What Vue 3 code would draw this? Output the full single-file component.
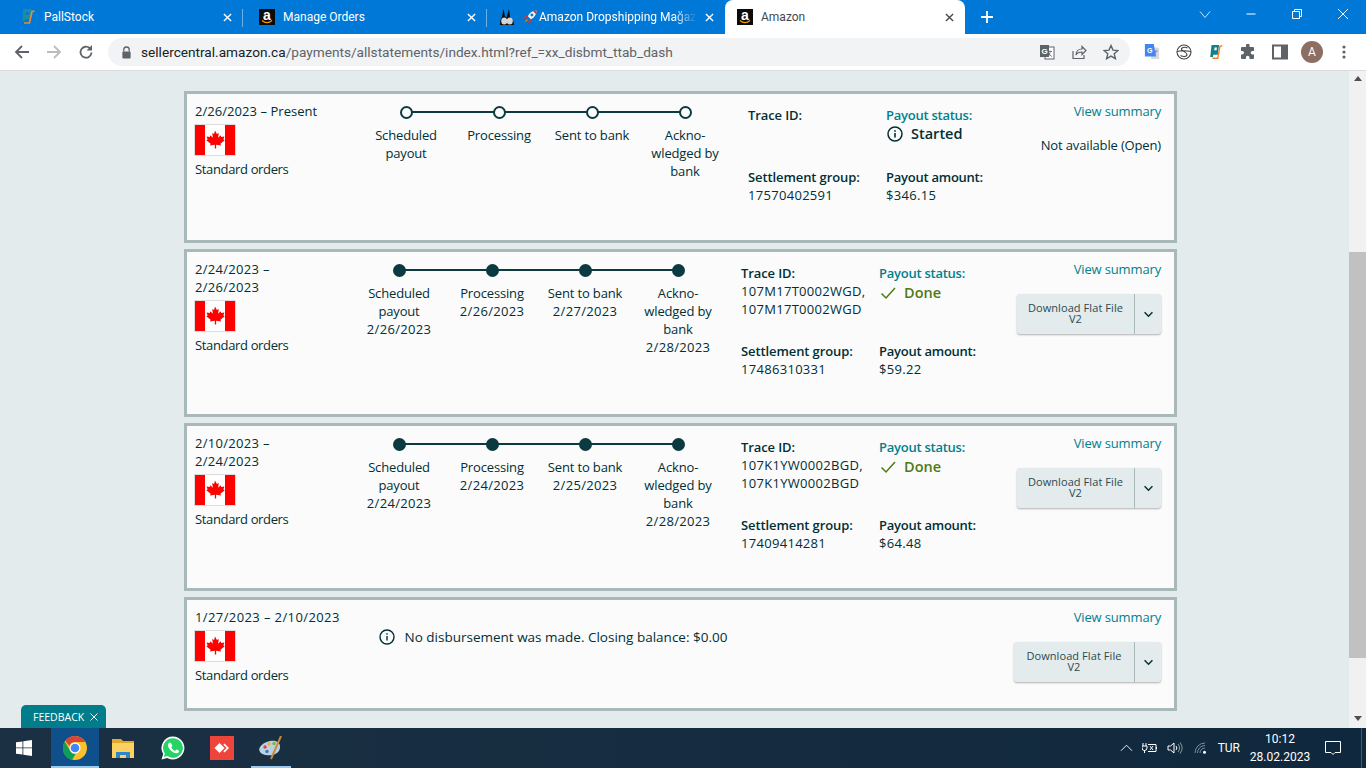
<template>
  <div class="screen">
    <!-- tab strip -->
    <div class="tabstrip">
      <div v-for="tab in tabs" :key="tab.title" class="tab" :class="[tab.cls, { active: tab.active, sep: tab.sep }]" :style="{ width: tab.width + 'px' }">
        <svg v-if="tab.icon === 'pall'" class="fav" viewBox="0 0 16 16">
          <path d="M3 0h8.500L10 10H5L4.500 12H2.500z" fill="#1b8f9c" />
          <path d="M6 3h3l-.5 3H5.500z" fill="#0078d7" />
          <path d="M14.500 2 12 2.500 9.500 14H4" fill="none" stroke="#e58a3a" stroke-width="1.700" />
        </svg>
        <span v-else-if="tab.icon === 'amazon'" class="fav amz">a<svg class="smile" viewBox="0 0 16 4"><path d="M3 .5c3 2.500 7 2.500 10 0" fill="none" stroke="#f90" stroke-width="1.300" /></svg></span>
        <template v-else>
          <svg class="fav" viewBox="0 0 16 16">
            <path d="M1 16c0-4 .5-6 2-8L4.500 0 6 7.500l1.500 1L10 0l1 8c2 1.500 4 4 4 8z" fill="#0c0c0c" />
            <ellipse cx="5.200" cy="12" rx="3" ry="3.500" fill="#d5d5d5" />
            <ellipse cx="10.800" cy="12" rx="3" ry="3.500" fill="#d5d5d5" />
          </svg>
          <svg class="rocket" viewBox="0 0 16 16">
            <path d="M15.500.500c-4.500 0-8 2.500-10 6.500l3.500 3.500c4-2 6.500-5.500 6.500-10z" fill="#f2f5f8" />
            <path d="M15.500.500c-1.500 0-3 .3-4 .8l3.200 3.200c.5-1 .8-2.500.8-4z" fill="#d9342b" />
            <circle cx="10.200" cy="5.800" r="1.700" fill="#2a6fb8" />
            <path d="M5.500 6.500 2 7 .5 10l3.500-.5zM9.500 10.500 9 14l-3 1.500.5-3.500z" fill="#d9342b" />
            <path d="M4.500 10.500 1.500 14.500l4-3z" fill="#f6a01a" />
          </svg>
        </template>
        <span class="tab-title" :class="{ fade: tab.fade }">{{ tab.title }}</span>
        <svg class="tab-x" viewBox="0 0 10 10"><path d="M1 1l8 8M9 1l-8 8" fill="none" stroke="currentColor" stroke-width="1.500" /></svg>
      </div>
      <svg class="newtab" viewBox="0 0 12 12"><path d="M6 0v12M0 6h12" fill="none" stroke="#fff" stroke-width="1.800" /></svg>
      <div class="winctl">
        <span><svg viewBox="0 0 12 12" width="12" height="12"><path d="M1 3.500l5 6 5-6" fill="none" stroke="#cfe4f7" /></svg></span>
        <span><svg viewBox="0 0 12 12" width="12" height="12"><path d="M1.500 6h9" stroke="#fff" /></svg></span>
        <span><svg viewBox="0 0 12 12" width="12" height="12"><path d="M1.500 3.500h7v7h-7zM3.500 3.500v-2h7v7h-2" fill="none" stroke="#fff" /></svg></span>
        <span><svg viewBox="0 0 12 12" width="12" height="12"><path d="M1 1l10 10M11 1 1 11" fill="none" stroke="#fff" /></svg></span>
      </div>
    </div>

    <!-- toolbar -->
    <div class="toolbar">
      <svg class="tool back" viewBox="0 0 16 16"><path d="M15 8H2M8 2 2 8l6 6" fill="none" stroke="#5f6368" stroke-width="1.800" /></svg>
      <svg class="tool forward" viewBox="0 0 16 16"><path d="M1 8h13M8 2l6 6-6 6" fill="none" stroke="#babcbe" stroke-width="1.800" /></svg>
      <svg class="tool reload" viewBox="0 0 16 16"><path d="M13.500 8.500A5.500 5.500 0 1 1 11.800 4.200" fill="none" stroke="#5f6368" stroke-width="1.800" /><path d="M14 1v5.500H8.500z" fill="#5f6368" /></svg>
      <div class="omnibox">
        <svg class="lock" viewBox="0 0 12 14"><path d="M3 6V4a3 3 0 0 1 6 0v2" fill="none" stroke="#5f6368" stroke-width="1.400" /><rect x="1.500" y="6" width="9" height="7.500" rx="1" fill="#5f6368" /></svg>
        <span class="url"><b>sellercentral.amazon.ca</b>/payments/allstatements/index.html?ref_=xx_disbmt_ttab_dash</span>
        <svg class="omni-ico" viewBox="0 0 16 16"><rect x="6" y="3" width="9" height="12" fill="#fff" stroke="#5f6368" /><path d="M9.500 7.500h3.500M11.200 6.500c0 3-1 5-2 6M10 9c.5 1.500 1.500 3 3 3.500" fill="none" stroke="#5f6368" stroke-width=".8" /><rect x="1" y="1" width="9" height="12" fill="#5f6368" /><text x="5.500" y="10" font-size="8" font-weight="700" text-anchor="middle" fill="#fff" font-family="Liberation Sans">G</text></svg>
        <svg class="omni-ico" viewBox="0 0 16 16"><path d="M2 7v7.500h11V11" fill="none" stroke="#5f6368" stroke-width="1.200" /><path d="M5 11c0-4 3-6 6-6V2.500l4 4-4 4V8c-3 0-5 1-6 3z" fill="none" stroke="#5f6368" stroke-width="1.200" /></svg>
        <svg class="omni-ico" viewBox="0 0 16 16"><path d="m8 1.500 2 4.600 5 .4-3.800 3.300 1.200 4.900L8 12.100l-4.400 2.600 1.200-4.900L1 6.500l5-.4z" fill="none" stroke="#5f6368" stroke-width="1.400" /></svg>
      </div>
      <div class="extensions">
        <svg class="ext" viewBox="0 0 16 18"><rect x="7" y="4" width="9" height="13" fill="#d7d9dc" /><path d="M10.500 8h4M12.500 7c0 3-1 5-2 6" fill="none" stroke="#777" stroke-width=".8" /><path d="M0 0h10l2.500 14H0z" fill="#4285f4" /><text x="5.500" y="10" font-size="8" font-weight="700" text-anchor="middle" fill="#fff" font-family="Liberation Sans">G</text></svg>
        <svg class="ext" viewBox="0 0 16 16"><circle cx="8" cy="8" r="7" fill="none" stroke="#444" stroke-width="1.100" /><path d="M1 7.500c3-1 10-1 14 0M11.500 4C9 2.500 5 3.500 5.500 5.500S11 8 11 10.500s-4 2.500-6.500 1" fill="none" stroke="#444" stroke-width="1.100" /></svg>
        <svg class="ext" viewBox="0 0 16 18"><path d="M3 1h8.500L10 12H5l-.5 2.500H1.500z" fill="#14808c" /><path d="M6.500 4h2.500l-.4 3H6z" fill="#fff" /><path d="M15 2l-2.500.5-2.500 13.500H4" fill="none" stroke="#ef7f2a" stroke-width="1.500" /></svg>
        <svg class="ext" viewBox="0 0 16 16"><path d="M6 1.500a1.800 1.800 0 0 1 3.600 0V3H13a1 1 0 0 1 1 1v3h-1.500a1.800 1.800 0 0 0 0 3.600H14V14a1 1 0 0 1-1 1H9.500v-1.500a1.800 1.800 0 0 0-3.600 0V15H2a1 1 0 0 1-1-1v-3.500h1.200a1.800 1.800 0 0 0 0-3.600H1V4a1 1 0 0 1 1-1h4z" fill="#5f6368" /></svg>
        <svg class="ext" viewBox="0 0 16 16"><rect x="1" y="1.500" width="14" height="13" fill="none" stroke="#5f6368" stroke-width="2" /><rect x="9" y="1.500" width="6" height="13" fill="#5f6368" /></svg>
        <span class="avatar">A</span>
        <svg class="ext" viewBox="0 0 16 16"><circle cx="8" cy="3" r="1.600" fill="#5f6368" /><circle cx="8" cy="8" r="1.600" fill="#5f6368" /><circle cx="8" cy="13" r="1.600" fill="#5f6368" /></svg>
      </div>
    </div>

    <!-- page -->
    <div class="viewport">
      <div class="page">
        <section v-for="row in statements" :key="row.date" class="card" :class="row.kind">
          <div class="col-left">
            <div class="date num">{{ row.date }}</div>
            <svg class="flag" viewBox="0 0 42 32">
              <rect x=".5" y=".5" width="41" height="31" fill="#fff" stroke="#dcdcdc" />
              <rect x="1" y="1" width="10" height="30" fill="#f00" />
              <rect x="31" y="1" width="10" height="30" fill="#f00" />
              <path d="M21 6.500l1.900 3.500 1.900-1-.7 4.800 2.500-2.500.6 1.600 3.200-.5-1 3.200 1.400.7-4.400 3.500.6 1.700-4.900-.7.100 3.700h-1.400l.1-3.700-4.900.7.600-1.700-4.400-3.500 1.400-.7-1-3.200 3.200.5.600-1.600 2.500 2.500-.7-4.800 1.900 1z" fill="#f00" />
            </svg>
            <div class="orders">Standard orders</div>
          </div>

          <template v-if="row.steps">
            <div class="timeline">
              <div v-for="(step, i) in row.steps" :key="step.label" class="step" :class="{ filled: row.filled, last: i === row.steps.length - 1 }">
                <span class="dot"></span>
                <span class="step-label">{{ step.label }}</span>
                <span v-if="step.date" class="step-date num">{{ step.date }}</span>
              </div>
            </div>
            <div class="info">
              <div class="cell">
                <div class="key">Trace ID:</div>
                <div v-for="t in row.trace" :key="t + row.date" class="val num">{{ t }}</div>
              </div>
              <div class="cell">
                <div class="key status-key">Payout status:</div>
                <div class="status" :class="row.filled ? 'done' : 'started'">
                  <svg v-if="row.filled" class="status-ico" viewBox="0 0 16 16"><path d="M1.500 8.500 6 13l9-10" fill="none" stroke="#4f7a12" stroke-width="1.500" /></svg>
                  <svg v-else class="status-ico" viewBox="0 0 16 16"><circle cx="8" cy="8" r="7" fill="none" stroke="#002f36" stroke-width="1.500" /><rect x="7.200" y="7" width="1.600" height="4.500" fill="#002f36" /><rect x="7.200" y="4.200" width="1.600" height="1.600" fill="#002f36" /></svg>
                  {{ row.filled ? 'Done' : 'Started' }}
                </div>
              </div>
              <div class="cell">
                <div class="key">Settlement group:</div>
                <div class="val num">{{ row.group }}</div>
              </div>
              <div class="cell">
                <div class="key">Payout amount:</div>
                <div class="val num">{{ row.amount }}</div>
              </div>
            </div>
          </template>

          <div v-else class="notice">
            <svg class="notice-ico" viewBox="0 0 16 16"><circle cx="8" cy="8" r="7" fill="none" stroke="#002f36" stroke-width="1.400" /><rect x="7.300" y="7" width="1.400" height="4.500" fill="#002f36" /><rect x="7.300" y="4.200" width="1.400" height="1.500" fill="#002f36" /></svg>
            No disbursement was made. Closing balance: $0.00
          </div>

          <div class="col-right">
            <a class="summary">View summary</a>
            <div v-if="row.kind === 'open'" class="na">Not available (Open)</div>
            <div v-else class="download">
              <span class="dl-main">Download Flat File<br />V2</span>
              <span class="dl-arrow"><svg viewBox="0 0 12 8" width="11" height="7"><path d="M1.500 1.500 6 6l4.500-4.500" fill="none" stroke="#002f36" stroke-width="1.600" /></svg></span>
            </div>
          </div>
        </section>
      </div>
      <div class="scrollbar">
        <span class="arrow up"></span>
        <span class="thumb"></span>
        <span class="arrow down"></span>
      </div>
      <div class="feedback">FEEDBACK <svg viewBox="0 0 8 8" width="8" height="8"><path d="M.5.500l7 7M7.500.500l-7 7" fill="none" stroke="#fff" stroke-width="1" /></svg></div>
    </div>

    <!-- taskbar -->
    <div class="taskbar">
      <svg class="start" viewBox="0 0 16 16"><path d="M0 2.300 6.500 1.400v6.100H0zM7.300 1.300 16 0v7.500H7.300zM0 8.300h6.500v6.200L0 13.700zM7.300 8.300H16V16l-8.700-1.300z" fill="#fff" /></svg>
      <div class="task chrome">
        <svg viewBox="0 0 24 24" width="24" height="24">
          <circle cx="12" cy="12" r="12" fill="#fbc02d" />
          <path d="M12 0a12 12 0 0 1 10.400 6H12a6 6 0 0 0-5.700 4L2.300 4.800A12 12 0 0 1 12 0z" fill="#db4437" />
          <path d="M1.800 5.600 7 14.500a6 6 0 0 0 5.500 3.500L9 24A12 12 0 0 1 1.800 5.600z" fill="#0f9d58" />
          <circle cx="12" cy="12" r="5.500" fill="#fff" /><circle cx="12" cy="12" r="4.300" fill="#4285f4" />
        </svg>
      </div>
      <div class="task folder">
        <svg viewBox="0 0 24 24" width="24" height="24"><path d="M1 3h9l2 2h11v17H1z" fill="#e0a92e" /><rect x="1" y="7" width="22" height="15" fill="#fbd25f" /><path d="M5 22v-6h14v6h-4v-3H9v3z" fill="#2f86c9" /></svg>
      </div>
      <div class="task whatsapp">
        <svg viewBox="0 0 24 24" width="24" height="24"><path d="M12 .5A11.500 11.500 0 0 0 2.200 18L.5 23.500 6.200 22A11.500 11.500 0 1 0 12 .5z" fill="#fff" /><path d="M12 2.200A9.800 9.800 0 0 0 3.800 17.500l-1 3.500 3.600-1A9.800 9.800 0 1 0 12 2.200z" fill="#25d366" /><path d="M8.800 6.500c-.6 0-1.800 1-1.800 2.800 0 3 4.500 8 8.500 8 1.800 0 2.700-1.400 2.700-2.200 0-.4-2.300-1.700-2.700-1.600-.4.100-.9 1.300-1.300 1.300-1 0-3.900-2.500-3.900-3.600 0-.4 1-1 1-1.500 0-.4-1-3.200-2.500-3.200z" fill="#fff" /></svg>
      </div>
      <div class="task anydesk">
        <svg viewBox="0 0 24 24" width="24" height="24"><rect width="24" height="24" fill="#ef443b" /><path d="M9.500 7l5 5-5 5-5-5z" fill="#fff" /><path d="M14.500 7.500l4.500 4.500-4.500 4.500-1.200-1.200 3.300-3.300-3.300-3.300z" fill="#fff" /></svg>
      </div>
      <div class="task paint">
        <svg viewBox="0 0 24 24" width="24" height="24"><path d="M11 5c6-1 10 1 10 6 0 7-8 9-14 8-6-1-8-5-6-8s5-5 10-6z" fill="#b9d3e4" /><circle cx="6" cy="11" r="1.700" fill="#d9453a" /><circle cx="10" cy="8" r="1.700" fill="#ecb22e" /><circle cx="15" cy="7.500" r="1.700" fill="#7cb342" /><circle cx="8" cy="15.500" r="1.700" fill="#3b78c3" /><path d="M22 0 12 23" stroke="#c98a3c" stroke-width="2" /></svg>
      </div>
      <div class="tray">
        <svg class="tray-ico chev" viewBox="0 0 14 8"><path d="M1 7l6-6 6 6" fill="none" stroke="#fff" /></svg>
        <svg class="tray-ico" viewBox="0 0 16 12" width="16" height="12"><path d="M1 1v3M4 1v3M0 4h5v2a2 2 0 0 1-5 0zM2.500 8v3" fill="none" stroke="#fff" /><path d="M6 2.500h8v7H6M14.500 5v2" fill="none" stroke="#fff" /><path d="M8 4l3 4M11 4 8 8" stroke="#fff" /></svg>
        <svg class="tray-ico spk" viewBox="0 0 16 12" width="16" height="12"><path d="M1 4h2.500L7 1v10L3.500 8H1z" fill="none" stroke="#fff" /><path d="M9 4a3 3 0 0 1 0 4" fill="none" stroke="#fff" /><path d="M11 2a6 6 0 0 1 0 8M13 .5a9 9 0 0 1 0 11" fill="none" stroke="#8b99a3" /></svg>
        <svg class="tray-ico wifi" viewBox="0 0 14 12" width="14" height="12"><path d="M1 11a10 10 0 0 1 10-10M3.500 11A7.500 7.500 0 0 1 11 3.500M6 11a5 5 0 0 1 5-5" fill="none" stroke="#7d8c98" /><circle cx="10.500" cy="10.200" r="1.500" fill="#fff" /></svg>
        <span class="lang">TUR</span>
        <div class="clock"><div>10:12</div><div>28.02.2023</div></div>
        <svg class="notif" viewBox="0 0 16 16" width="16" height="16"><path d="M.5 1.500h15v11H10L8 14.500 6 12.500H.5z" fill="none" stroke="#fff" /></svg>
        <span class="desk"></span>
      </div>
    </div>
  </div>
</template>

<script setup>
const tabs = [
  { title: 'PallStock', icon: 'pall', width: 243, sep: true },
  { title: 'Manage Orders', icon: 'amazon', width: 244, sep: true, cls: 'second' },
  { title: 'Amazon Dropshipping Mağazası', icon: 'rocket', width: 238, fade: true },
  { title: 'Amazon', icon: 'amazon', width: 240, active: true }
]

const steps = (a, b, c, d) => [
  { label: 'Scheduled payout', date: a },
  { label: 'Processing', date: b },
  { label: 'Sent to bank', date: c },
  { label: 'Ackno-wledged by bank', date: d }
]

const statements = [
  {
    date: '2/26/2023 – Present',
    kind: 'open',
    filled: false,
    steps: steps(),
    trace: [],
    group: '17570402591',
    amount: '$346.15'
  },
  {
    date: '2/24/2023 – 2/26/2023',
    kind: 'paid',
    filled: true,
    steps: steps('2/26/2023', '2/26/2023', '2/27/2023', '2/28/2023'),
    trace: ['107M17T0002WGD,', '107M17T0002WGD'],
    group: '17486310331',
    amount: '$59.22'
  },
  {
    date: '2/10/2023 – 2/24/2023',
    kind: 'paid',
    filled: true,
    steps: steps('2/24/2023', '2/24/2023', '2/25/2023', '2/28/2023'),
    trace: ['107K1YW0002BGD,', '107K1YW0002BGD'],
    group: '17409414281',
    amount: '$64.48'
  },
  {
    date: '1/27/2023 – 2/10/2023',
    kind: 'empty'
  }
]
</script>

<style>
html, body { margin: 0; overflow: hidden; }
</style>

<style scoped>
.screen {
  width: 1366px;
  height: 768px;
  overflow: hidden;
  display: flex;
  flex-direction: column;
  font-family: "Open Sans", "Liberation Sans", sans-serif;
  color: #002f36;
}

/* chrome */
.tabstrip {
  height: 34px;
  flex: none;
  background: #0078d7;
  display: flex;
  align-items: center;
  color: #fff;
}
.tab {
  height: 34px;
  box-sizing: border-box;
  display: flex;
  align-items: center;
  padding: 0 9px 0 12px;
  position: relative;
  font-family: Roboto, sans-serif;
  font-size: 12px;
}
.tab.second { padding-left: 16px; }
.tab.sep::after {
  content: "";
  position: absolute;
  right: 0;
  top: 9px;
  width: 1px;
  height: 18px;
  background: #6db0e6;
}
.tab.active {
  background: #fff;
  color: #45494d;
  border-radius: 8px 8px 0 0;
}
.fav { width: 16px; height: 16px; flex: none; margin-right: 8px; }
.tab:first-child .fav { margin-left: 8px; margin-right: 8px; }
.amz {
  position: relative;
  background: #0b0b0b;
  color: #fff;
  font: 700 14px/12px "Liberation Sans", sans-serif;
  text-align: center;
}
.smile { position: absolute; left: 0; bottom: 1px; width: 16px; height: 4px; }
.rocket { width: 14px; height: 14px; flex: none; margin-right: 2px; }
.tab-title { flex: 1; white-space: nowrap; overflow: hidden; }
.tab-title.fade {
  -webkit-mask-image: linear-gradient(90deg, #000 85%, transparent);
  mask-image: linear-gradient(90deg, #000 85%, transparent);
}
.tab-x { width: 9px; height: 9px; flex: none; margin: 0 2px 0 8px; }
.newtab { width: 12px; height: 12px; margin-left: 16px; }
.winctl { margin-left: auto; display: flex; align-self: stretch; }
.winctl span {
  width: 46px;
  display: flex;
  align-items: center;
  justify-content: center;
  padding-bottom: 6px;
  box-sizing: border-box;
}

.toolbar {
  height: 37px;
  flex: none;
  box-sizing: border-box;
  background: #fff;
  border-bottom: 1px solid #dadce0;
  display: flex;
  align-items: center;
}
.tool { width: 16px; height: 16px; flex: none; }
.back { margin-left: 14px; }
.forward { margin-left: 16px; }
.reload { margin-left: 16px; }
.omnibox {
  margin-left: 14px;
  width: 1022px;
  height: 28px;
  border-radius: 14px;
  background: #f1f3f4;
  display: flex;
  align-items: center;
  padding-left: 13px;
  box-sizing: border-box;
}
.lock { width: 11px; height: 13px; flex: none; }
.url {
  margin-left: 9px;
  flex: 1;
  font-family: Roboto, sans-serif;
  font-size: 13.650px;
  color: #5f6368;
  white-space: nowrap;
}
.url b { font-weight: 400; color: #202124; }
.omni-ico { width: 16px; height: 16px; flex: none; margin-right: 16px; }
.omni-ico:last-child { margin-right: 11px; }
.extensions { display: flex; align-items: center; margin-left: 14px; gap: 16px; }
.ext { width: 16px; height: 16px; flex: none; }
.avatar {
  width: 22px;
  height: 22px;
  margin: 0 -3px;
  border-radius: 50%;
  background: #8d6e63;
  color: #fff;
  font: 12px Roboto, sans-serif;
  display: flex;
  align-items: center;
  justify-content: center;
}

/* page */
.viewport {
  flex: 1;
  min-height: 0;
  display: flex;
  position: relative;
  background: #e3ebec;
}
.page {
  width: 1349px;
  box-sizing: border-box;
  padding: 20px 0 0 184px;
  display: flex;
  flex-direction: column;
  gap: 6px;
}
.card {
  width: 993px;
  box-sizing: border-box;
  border: 3px solid #a9b8b9;
  background: #fbfbfb;
  display: flex;
  font-size: 13px;
  line-height: 18px;
  letter-spacing: -.15px;
  padding: 8px 13px 0 8px;
}
.card.open { height: 152px; }
.card.paid { height: 168px; }
.card.empty { height: 114px; }

.num { letter-spacing: .3px; }
.orders { letter-spacing: -.35px; }
.open .date { letter-spacing: .05px; }
.empty .date { letter-spacing: .4px; }

.col-left { width: 157.500px; flex: none; }
.open .col-left { width: 164.500px; }
.paid .date { width: 90px; }
.flag { display: block; width: 42px; height: 32px; margin: 4px 0 4px -1px; }

.timeline { display: flex; width: 372px; flex: none; }
.step {
  width: 93px;
  display: flex;
  flex-direction: column;
  align-items: center;
  text-align: center;
  position: relative;
  padding: 4px 6px 0;
  box-sizing: border-box;
}
.step::after {
  content: "";
  position: absolute;
  left: 50%;
  width: 100%;
  top: 9px;
  height: 2px;
  background: #0b3a40;
}
.step.last::after { display: none; }
.dot {
  width: 13px;
  height: 13px;
  box-sizing: border-box;
  border: 2px solid #0b3a40;
  border-radius: 50%;
  background: #fbfbfb;
  position: relative;
  z-index: 1;
  margin-bottom: 7px;
}
.filled .dot { background: #0b3a40; }

.info {
  margin-left: 16.500px;
  padding-top: 4px;
  display: grid;
  grid-template-columns: 138px 130px;
  row-gap: 24px;
  align-content: start;
}
.key { font-weight: 600; letter-spacing: -.1px; }
.cell:nth-child(even) .key { letter-spacing: -.25px; }
.status-key { color: #00808f; }
.status {
  display: flex;
  align-items: center;
  font-size: 14.500px;
  font-weight: 600;
  line-height: 20px;
  letter-spacing: 0;
}
.status.done { color: #4f7a12; padding-top: 1px; }
.status-ico { width: 16px; height: 16px; margin: 0 8px 0 1px; flex: none; }

.notice {
  margin: 20px 0 0 26px;
  display: flex;
  align-items: center;
  height: 18px;
  white-space: nowrap;
  font-size: 13.500px;
  letter-spacing: 0;
}
.notice-ico { width: 16px; height: 16px; margin-right: 10px; }

.col-right {
  margin-left: auto;
  display: flex;
  flex-direction: column;
  align-items: flex-end;
}
.summary { color: #00808f; }
.na { margin-top: 16px; }
.download {
  margin-top: 16px;
  width: 144px;
  height: 40px;
  display: flex;
  background: #e3ebec;
  border-radius: 3px;
  box-shadow: 0 1px 2px rgba(0, 0, 0, .3);
  font-size: 11px;
  line-height: 11px;
  letter-spacing: .08px;
  color: #2b4a50;
}
.empty .download { width: 147px; }
.dl-main {
  flex: 1;
  text-align: center;
  border-right: 1px solid #a9b8b9;
  display: block;
  padding-top: 8px;
}
.dl-arrow {
  width: 26px;
  flex: none;
  display: flex;
  align-items: center;
  justify-content: center;
}

.scrollbar {
  width: 17px;
  flex: none;
  background: #f1f1f1;
  display: flex;
  flex-direction: column;
  align-items: center;
}
.arrow { width: 0; height: 0; border: 4px solid transparent; }
.arrow.up { border-top: 0; border-bottom: 5px solid #505050; margin-top: 5px; }
.arrow.down { border-bottom: 0; border-top: 5px solid #505050; margin-top: 58px; }
.thumb { width: 17px; height: 406px; margin-top: 171px; background: #c1c1c1; }

.feedback {
  position: absolute;
  left: 21px;
  bottom: 0;
  width: 85px;
  height: 23px;
  box-sizing: border-box;
  padding-left: 12px;
  background: #007c8a;
  border-radius: 5px 5px 0 0;
  color: #fff;
  font-size: 10.500px;
  display: flex;
  align-items: center;
  gap: 6px;
}

/* taskbar */
.taskbar {
  height: 40px;
  flex: none;
  background: linear-gradient(90deg, #1b3043, #10283d);
  display: flex;
  align-items: stretch;
  color: #fff;
  font-family: Roboto, sans-serif;
}
.start { width: 16px; height: 16px; margin: 12px 19px 0 16px; }
.task {
  width: 48px;
  display: flex;
  align-items: center;
  justify-content: center;
  box-sizing: border-box;
  border-bottom: 2px solid transparent;
  padding-top: 2px;
}
.task.chrome { background: #0f4f8a; border-bottom-color: #99c9ee; }
.task.whatsapp { margin-left: 2px; }
.task.anydesk { margin: 0 5px 0 1px; }
.task.paint { width: 40px; border-bottom-color: #99c9ee; }
.tray {
  margin-left: auto;
  display: flex;
  align-items: center;
  align-self: stretch;
  font-size: 12px;
}
.tray-ico { margin-right: 9px; }
.tray-ico.spk { margin-right: 11px; }
.tray-ico.wifi { margin-right: 10px; }
.chev { width: 13px; height: 8px; }
.lang { margin-right: 5px; }
.clock { width: 70px; text-align: center; line-height: 18px; }
.notif { margin: 0 20px 0 10px; }
.desk { width: 1px; align-self: stretch; background: #46586a; margin-right: 4px; }
</style>
